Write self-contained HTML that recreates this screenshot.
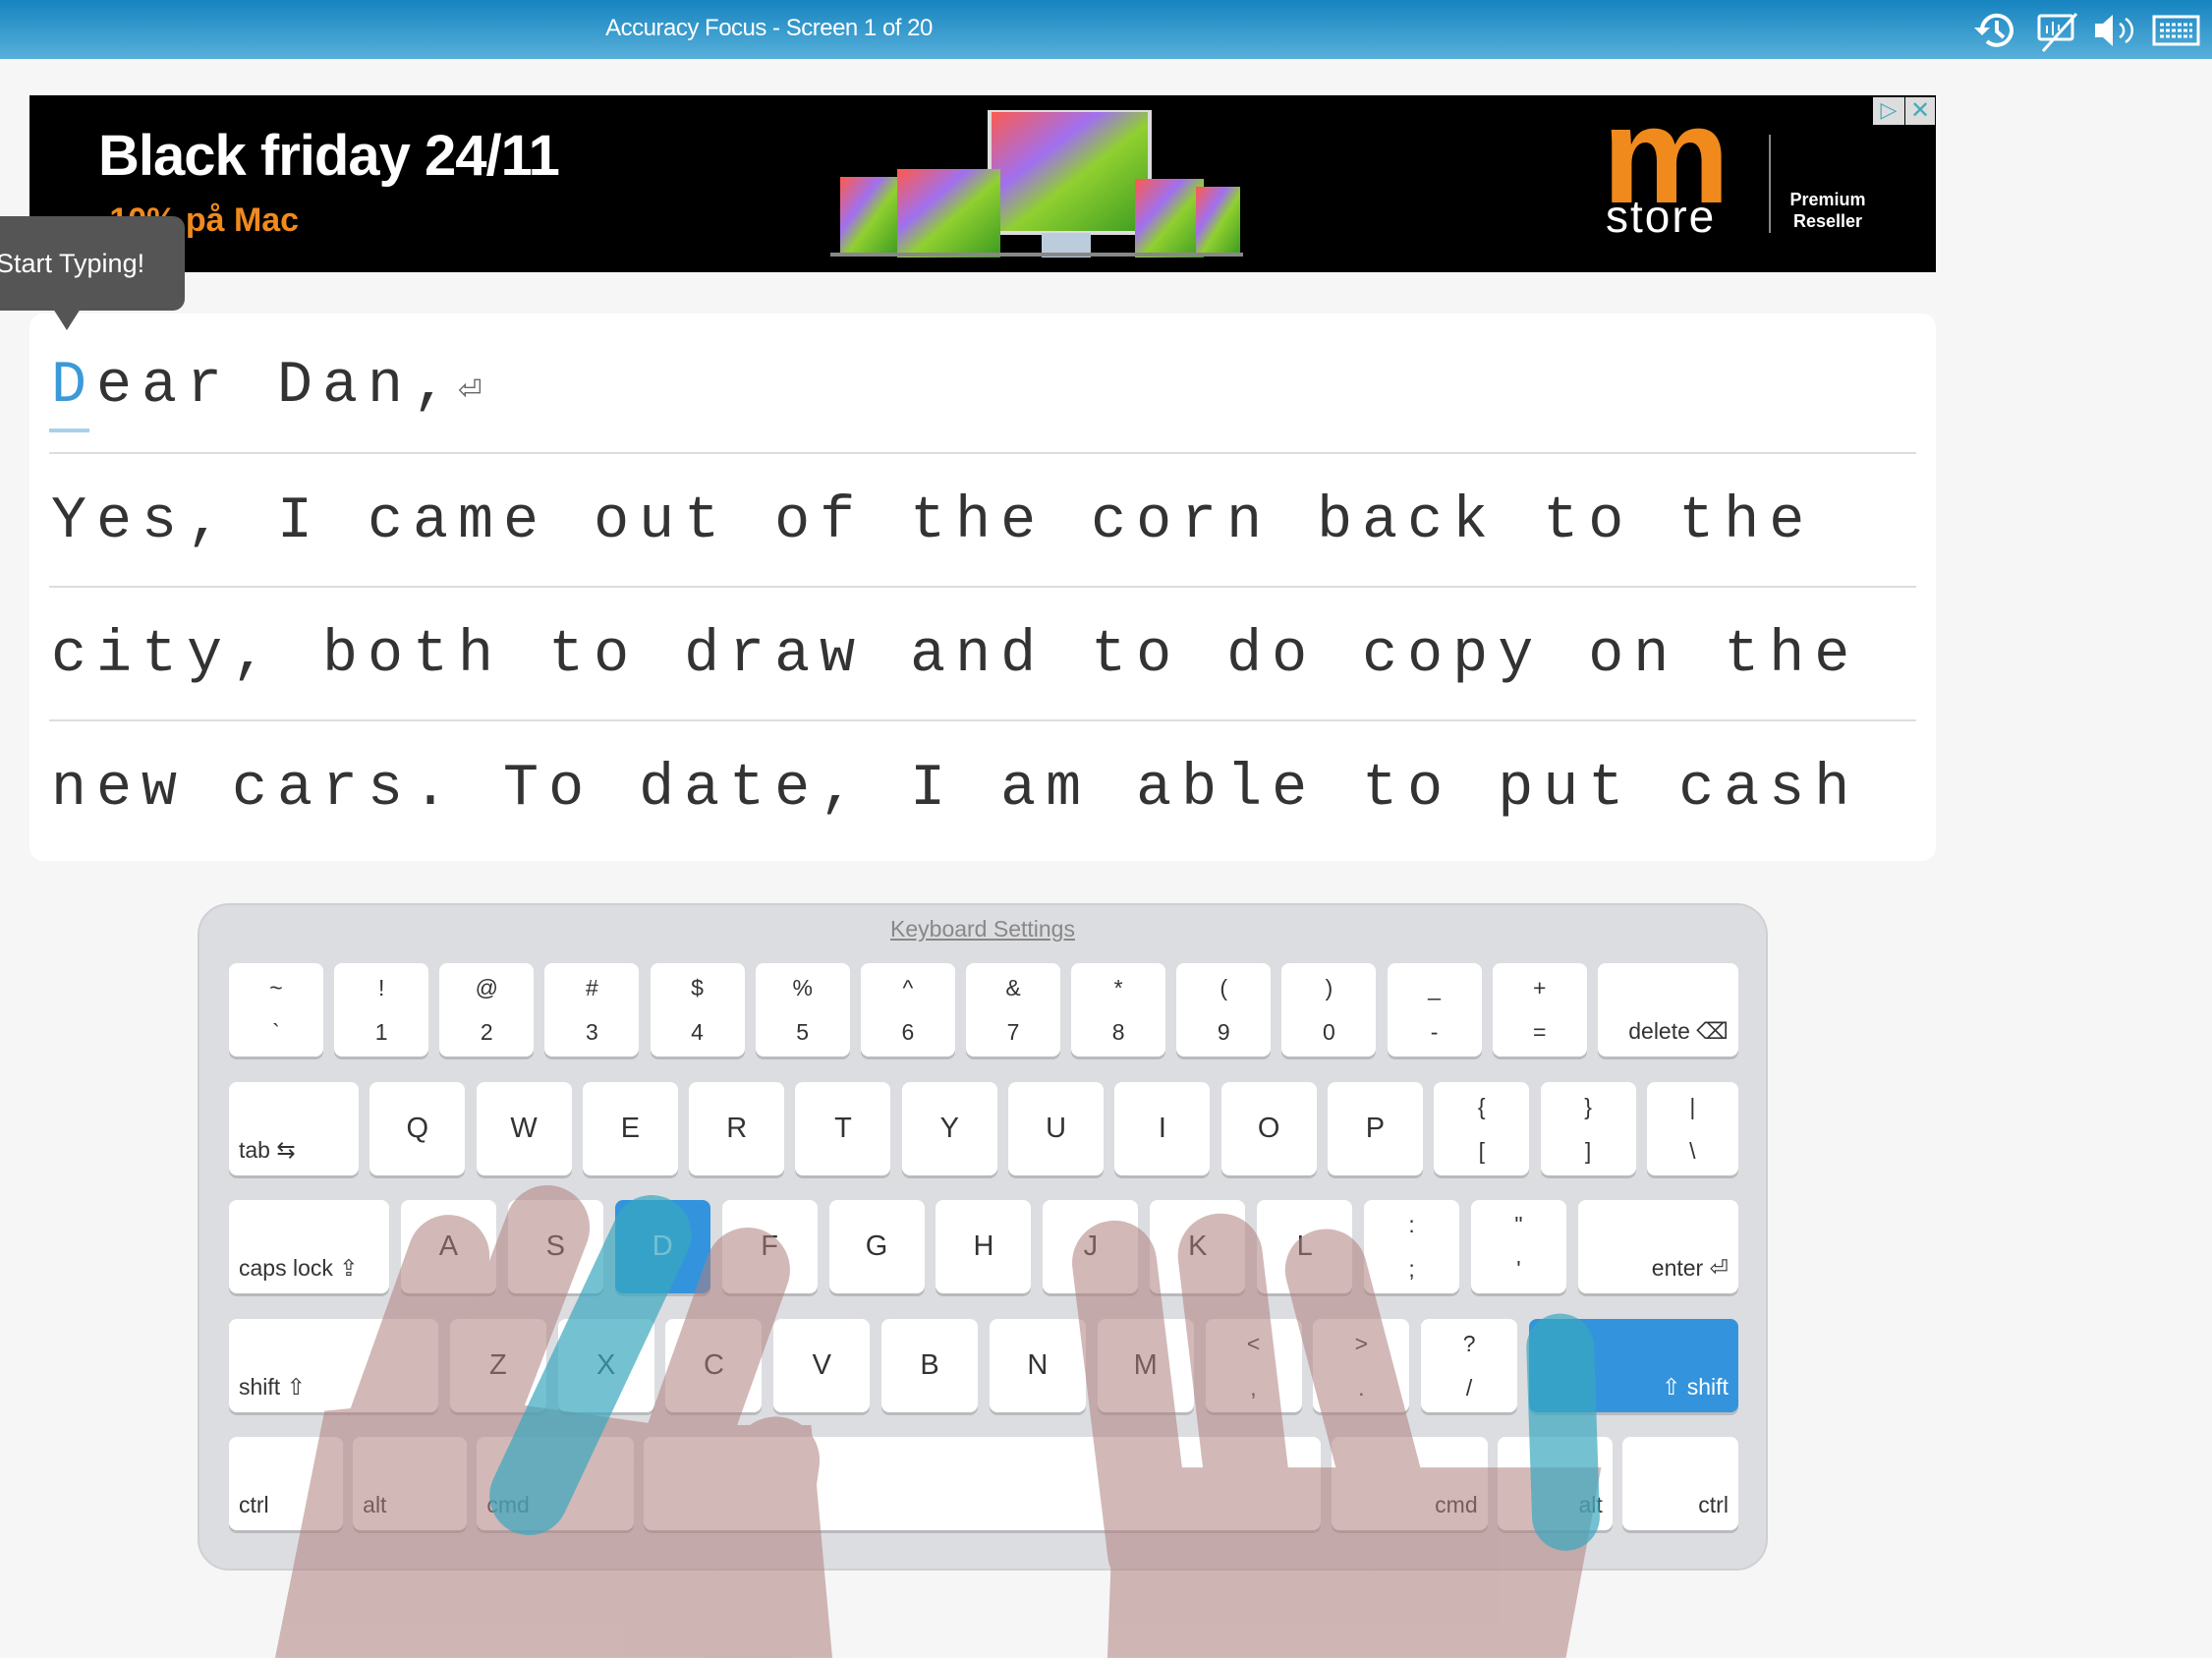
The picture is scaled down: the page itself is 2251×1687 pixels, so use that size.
<!DOCTYPE html>
<html><head><meta charset="utf-8"><style>
*{box-sizing:border-box;margin:0;padding:0}
body{width:2251px;height:1687px;background:#f6f6f6;position:relative;overflow:hidden;font-family:"Liberation Sans",sans-serif}
.top{position:absolute;left:0;top:0;width:2251px;height:60px;background:linear-gradient(#1684c0,#58b0da)}
.title{position:absolute;left:0;width:1565px;top:15px;text-align:center;color:#fff;font-size:24px;letter-spacing:-0.5px}
.ad{position:absolute;left:30px;top:97px;width:1940px;height:180px;background:#000}
.card{position:absolute;left:30px;top:319px;width:1940px;height:557px;background:#fff;border-radius:14px}
.ln{position:absolute;left:20px;width:1900px;height:2px;background:#ddd}
.tx{position:absolute;left:22px;font-family:"Liberation Mono",monospace;font-size:60px;letter-spacing:10px;color:#333;white-space:pre}
.kb{position:absolute;left:201px;top:919px;width:1598px;height:679px;background:#dcdde0;border-radius:32px;border:2px solid #cfd0d3}
.row{position:absolute;left:30px;width:1536px;display:flex;justify-content:space-between}
.k{height:95px;background:#fff;border-radius:8px;box-shadow:0 3px 0 #b9babd;position:relative;color:#333;font-size:29px;display:flex;align-items:center;justify-content:center}
.d{flex-direction:column;font-size:23px;gap:18px}
.s{font-size:23px;justify-content:flex-start;align-items:flex-end;padding:0 0 12px 10px}
.r{justify-content:flex-end;padding-right:10px}
.b{background:#3394dd;color:#fff}
</style></head><body>
<div class="top"><div class="title">Accuracy Focus - Screen 1 of 20</div>
<svg style="position:absolute;left:2005px;top:8px" width="240" height="46" viewBox="0 0 240 46" fill="none" stroke="#fff" stroke-width="4">
<path d="M12 22a15 15 0 1 1 5 12"/><path d="M4 20l8 8 8-8" fill="#fff" stroke="none"/><path d="M27 13v11l7 6"/>
<rect x="70" y="8" width="34" height="24" rx="2" stroke-width="3"/><path d="M74 44L108 6" stroke-width="3"/><path d="M78 18v8M84 14v14M90 17v6" stroke-width="2"/>
<path d="M127 16h8l10-9v32l-10-9h-8z" fill="#fff" stroke="none"/><path d="M152 16a8 8 0 0 1 0 14M158 11a14 14 0 0 1 0 24" stroke-width="2.5"/>
<rect x="187" y="9" width="45" height="28" stroke-width="3"/><path d="M193 17h33M193 23h33M193 29h33" stroke-width="3" stroke-dasharray="4 2"/>
</svg></div>
<div class="ad">
<div style="position:absolute;left:70px;top:28px;color:#fff;font-weight:bold;font-size:58px;letter-spacing:-1px">Black friday 24/11</div>
<div style="position:absolute;left:70px;top:108px;color:#f08a1c;font-weight:bold;font-size:34px">-10% på Mac</div>
<svg style="position:absolute;left:815px;top:15px" width="460" height="150">
<defs><linearGradient id="g" x1="0" y1="0" x2="1" y2="1"><stop offset="0" stop-color="#ff5a4a"/><stop offset=".35" stop-color="#a070f0"/><stop offset=".55" stop-color="#90d030"/><stop offset="1" stop-color="#3a9a20"/></linearGradient></defs>
<rect x="162" y="0" width="163" height="125" fill="url(#g)" stroke="#ddd" stroke-width="4"/>
<rect x="215" y="125" width="50" height="30" fill="#bcd"/>
<rect x="10" y="68" width="60" height="80" fill="url(#g)"/><rect x="68" y="60" width="105" height="90" fill="url(#g)"/>
<rect x="310" y="70" width="70" height="80" fill="url(#g)"/><rect x="372" y="78" width="45" height="70" fill="url(#g)"/>
<rect x="0" y="145" width="420" height="4" fill="#888"/></svg>
<div style="position:absolute;left:1600px;top:6px;color:#f08a1c;font-weight:bold;font-size:140px;line-height:110px;letter-spacing:-6px;transform:scaleX(1.05);transform-origin:left">m</div>
<div style="position:absolute;left:1604px;top:100px;color:#fff;font-size:46px;line-height:46px;letter-spacing:2px">store</div>
<div style="position:absolute;left:1770px;top:40px;width:2px;height:100px;background:#888"></div>
<div style="position:absolute;left:1790px;top:95px;color:#fff;font-size:18px;font-weight:bold;width:80px;text-align:center;line-height:22px">Premium<br>Reseller</div>
<div style="position:absolute;left:1876px;top:2px;width:32px;height:28px;background:#ddd;color:#4ab;font-size:22px;text-align:center">▷</div>
<div style="position:absolute;left:1909px;top:2px;width:30px;height:28px;background:#ddd;color:#4ab;font-size:24px;text-align:center;line-height:28px">✕</div>
</div>
<div class="card">
<div class="tx" style="top:40px"><span style="color:#3a9ad9">D</span>ear Dan,<span style="color:#666;font-size:40px;letter-spacing:0">⏎</span></div>
<div style="position:absolute;left:20px;top:117px;width:41px;height:4px;background:#a8d0ea"></div>
<div class="ln" style="top:141px"></div>
<div class="tx" style="top:178px">Yes, I came out of the corn back to the</div>
<div class="ln" style="top:277px"></div>
<div class="tx" style="top:314px">city, both to draw and to do copy on the</div>
<div class="ln" style="top:413px"></div>
<div class="tx" style="top:450px">new cars. To date, I am able to put cash</div>
</div>
<div style="position:absolute;left:0;top:220px;width:188px;height:96px;background:#555;border-radius:0 12px 12px 0;color:#fff;font-size:27px;line-height:96px;text-indent:-4px">Start Typing!</div>
<div style="position:absolute;left:54px;top:314px;border:14px solid transparent;border-top:22px solid #555"></div>
<div class="kb">
<div style="position:absolute;left:0;width:100%;top:11px;text-align:center;color:#888;font-size:23px;text-decoration:underline">Keyboard Settings</div>
<div class="row" style="top:59px">
<div class="k d" style="width:96px"><span>~</span><span>`</span></div><div class="k d" style="width:96px"><span>!</span><span>1</span></div><div class="k d" style="width:96px"><span>@</span><span>2</span></div><div class="k d" style="width:96px"><span>#</span><span>3</span></div><div class="k d" style="width:96px"><span>$</span><span>4</span></div><div class="k d" style="width:96px"><span>%</span><span>5</span></div><div class="k d" style="width:96px"><span>^</span><span>6</span></div><div class="k d" style="width:96px"><span>&amp;</span><span>7</span></div><div class="k d" style="width:96px"><span>*</span><span>8</span></div><div class="k d" style="width:96px"><span>(</span><span>9</span></div><div class="k d" style="width:96px"><span>)</span><span>0</span></div><div class="k d" style="width:96px"><span>_</span><span>-</span></div><div class="k d" style="width:96px"><span>+</span><span>=</span></div><div class="k s r" style="width:143px">delete ⌫</div>
</div>
<div class="row" style="top:180px">
<div class="k s" style="width:132px">tab ⇆</div><div class="k" style="width:97px">Q</div><div class="k" style="width:97px">W</div><div class="k" style="width:97px">E</div><div class="k" style="width:97px">R</div><div class="k" style="width:97px">T</div><div class="k" style="width:97px">Y</div><div class="k" style="width:97px">U</div><div class="k" style="width:97px">I</div><div class="k" style="width:97px">O</div><div class="k" style="width:97px">P</div><div class="k d" style="width:97px"><span>{</span><span>[</span></div><div class="k d" style="width:97px"><span>}</span><span>]</span></div><div class="k d" style="width:93px"><span>|</span><span>\</span></div>
</div>
<div class="row" style="top:300px">
<div class="k s" style="width:163px">caps lock ⇪</div><div class="k" style="width:97px">A</div><div class="k" style="width:97px">S</div><div class="k b" style="width:97px">D</div><div class="k" style="width:97px">F</div><div class="k" style="width:97px">G</div><div class="k" style="width:97px">H</div><div class="k" style="width:97px">J</div><div class="k" style="width:97px">K</div><div class="k" style="width:97px">L</div><div class="k d" style="width:97px"><span>:</span><span>;</span></div><div class="k d" style="width:97px"><span>"</span><span>'</span></div><div class="k s r" style="width:163px">enter ⏎</div>
</div>
<div class="row" style="top:421px">
<div class="k s" style="width:213px">shift ⇧</div><div class="k" style="width:98px">Z</div><div class="k" style="width:98px">X</div><div class="k" style="width:98px">C</div><div class="k" style="width:98px">V</div><div class="k" style="width:98px">B</div><div class="k" style="width:98px">N</div><div class="k" style="width:98px">M</div><div class="k d" style="width:98px"><span>&lt;</span><span>,</span></div><div class="k d" style="width:98px"><span>&gt;</span><span>.</span></div><div class="k d" style="width:98px"><span>?</span><span>/</span></div><div class="k s r b" style="width:213px">⇧ shift</div>
</div>
<div class="row" style="top:541px">
<div class="k s" style="width:116px">ctrl</div><div class="k s" style="width:116px">alt</div><div class="k s" style="width:160px">cmd</div><div class="k" style="width:689px"></div><div class="k s r" style="width:159px">cmd</div><div class="k s r" style="width:117px">alt</div><div class="k s r" style="width:118px">ctrl</div>
</div>
</div>
<svg style="position:absolute;left:0;top:0" width="2251" height="1687" viewBox="0 0 1568 1175">
<g opacity="0.55" fill="#b07f7f" stroke="#b07f7f" stroke-linecap="round">
<path d="M230 1000L330 990L470 1010L575 1010L590 1175L195 1175Z" stroke="none"/>
<line x1="318" y1="890" x2="250" y2="1080" stroke-width="58"/>
<line x1="388" y1="870" x2="300" y2="1100" stroke-width="60"/>
<line x1="530" y1="900" x2="455" y2="1110" stroke-width="60"/>
<line x1="550" y1="1035" x2="530" y2="1175" stroke-width="62"/>
<path d="M790 1040L1135 1040L1110 1175L785 1175Z" stroke="none"/>
<line x1="790" y1="895" x2="815" y2="1100" stroke-width="60"/>
<line x1="865" y1="890" x2="890" y2="1100" stroke-width="60"/>
<line x1="940" y1="900" x2="990" y2="1090" stroke-width="58"/>
</g>
<g opacity="0.7" stroke="#3aa8c0" stroke-linecap="round">
<line x1="462" y1="875" x2="375" y2="1060" stroke-width="56"/>
<line x1="1106" y1="955" x2="1110" y2="1075" stroke-width="48"/>
</g>
</svg>
</body></html>
